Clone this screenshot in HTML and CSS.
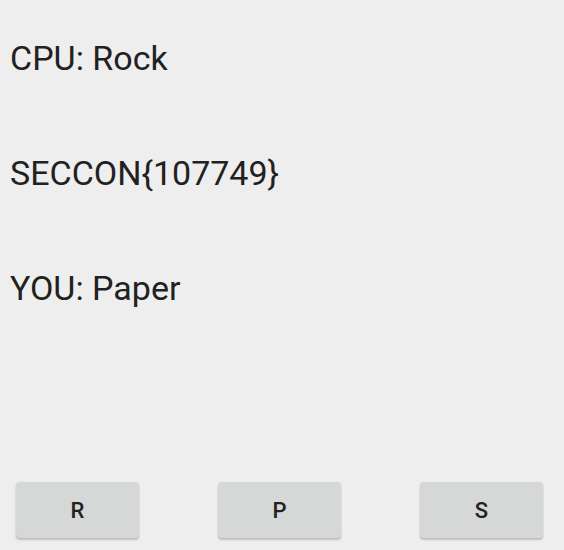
FILE: index.html
```html
<!DOCTYPE html>
<html lang="en">
<head>
<meta charset="utf-8">
<title>Rock Paper Scissors</title>
<link rel="stylesheet" href="styles.css">
</head>
<body>
<main class="game">
  <section class="results">
    <p class="line">CPU: Rock</p>
    <p class="line">SECCON{107749}</p>
    <p class="line">YOU: Paper</p>
  </section>
  <div class="choices">
    <button class="choice" type="button">R</button>
    <button class="choice" type="button">P</button>
    <button class="choice" type="button">S</button>
  </div>
</main>
</body>
</html>
```
FILE: styles.css
```css
body {
  margin: 0;
  background: #eeeeee;
  color: #212121;
  font-family: Roboto, sans-serif;
}

.game {
  box-sizing: border-box;
  min-height: 100vh;
  display: flex;
  flex-direction: column;
  justify-content: space-between;
  padding: 38px 21px 12px 10px;
}

.results {
  display: grid;
  gap: 75px;
}

.line {
  margin: 0;
  font-size: 34px;
  line-height: 40px;
}

.choices {
  display: flex;
  justify-content: space-between;
  padding-left: 6px;
}

.choice {
  width: 123px;
  height: 56px;
  padding: 2px 0 0;
  border: 0;
  border-radius: 4px;
  background: #d6d8d7;
  box-shadow: 0 2px 2px rgba(0, 0, 0, 0.2), 0 0 1px rgba(0, 0, 0, 0.12);
  color: #212121;
  font: 500 22px/54px Roboto, sans-serif;
}
```
